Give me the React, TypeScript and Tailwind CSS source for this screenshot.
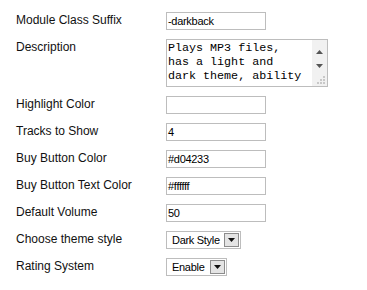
import React from 'react';

const rows: { label: string; value: string }[] = [
  { label: 'Highlight Color', value: '' },
  { label: 'Tracks to Show', value: '4' },
  { label: 'Buy Button Color', value: '#d04233' },
  { label: 'Buy Button Text Color', value: '#ffffff' },
  { label: 'Default Volume', value: '50' },
];

function Label({ children }: { children: React.ReactNode }) {
  return <div className="w-[150px] shrink-0 pt-[1px] text-[12px] leading-[15px] text-[#111]">{children}</div>;
}

function TextBox({ value }: { value: string }) {
  return (
    <div className="flex h-[18px] w-[100px] items-center border border-[#bdbdbd] bg-white pl-[1px] text-[11px] tracking-[-0.3px] text-black">
      {value}
    </div>
  );
}

function Select({ value, width }: { value: string; width: string }) {
  return (
    <div className={`flex h-[18px] items-center justify-between border border-[#bdbdbd] bg-white pl-[5px] pr-[1px] text-[11px] tracking-[-0.3px] text-black ${width}`}>
      <span>{value}</span>
      <div className="flex h-[14px] w-[15px] items-center justify-center border border-[#8c8c8c] bg-[#e4e4e4]">
        <svg width="7" height="4" viewBox="0 0 7 4">
          <path d="M0 0h7L3.5 4z" fill="#111" />
        </svg>
      </div>
    </div>
  );
}

export default function App() {
  return (
    <div className="min-h-screen bg-white pl-4 pt-[12px] font-['Liberation_Sans',Arial,sans-serif]">
      <div className="flex flex-col gap-[9px]">
        <div className="flex">
          <Label>Module Class Suffix</Label>
          <TextBox value="-darkback" />
        </div>

        <div className="flex">
          <Label>Description</Label>
          <div className="flex h-[48px] w-[162px] border border-[#bdbdbd] bg-white">
            <div className="flex-1 overflow-hidden pl-[1px] pt-[1px] font-['Liberation_Mono','Courier_New',monospace] text-[11.7px] leading-[14px] text-black">
              <div>Plays MP3 files,</div>
              <div>has a light and</div>
              <div>dark theme, ability</div>
            </div>
            <div className="relative flex w-[15px] flex-col items-center bg-[#f1f1f1]">
              <svg className="mt-[10px]" width="7" height="4" viewBox="0 0 7 4">
                <path d="M3.5 0L7 4H0z" fill="#555" />
              </svg>
              <svg className="mt-[10px]" width="7" height="4" viewBox="0 0 7 4">
                <path d="M0 0h7L3.5 4z" fill="#555" />
              </svg>
              <svg className="absolute bottom-[1px] right-[1px]" width="10" height="10" viewBox="0 0 10 10">
                <rect x="7" y="1" width="2" height="2" fill="#c8c8c8" />
                <rect x="4" y="4" width="2" height="2" fill="#c8c8c8" />
                <rect x="7" y="4" width="2" height="2" fill="#c8c8c8" />
                <rect x="1" y="7" width="2" height="2" fill="#c8c8c8" />
                <rect x="4" y="7" width="2" height="2" fill="#c8c8c8" />
                <rect x="7" y="7" width="2" height="2" fill="#c8c8c8" />
              </svg>
            </div>
          </div>
        </div>

        {rows.map((r) => (
          <div key={r.label} className="flex">
            <Label>{r.label}</Label>
            <TextBox value={r.value} />
          </div>
        ))}

        <div className="flex">
          <Label>Choose theme style</Label>
          <Select value="Dark Style" width="w-[75px]" />
        </div>

        <div className="flex">
          <Label>Rating System</Label>
          <Select value="Enable" width="w-[61px]" />
        </div>
      </div>
    </div>
  );
}
